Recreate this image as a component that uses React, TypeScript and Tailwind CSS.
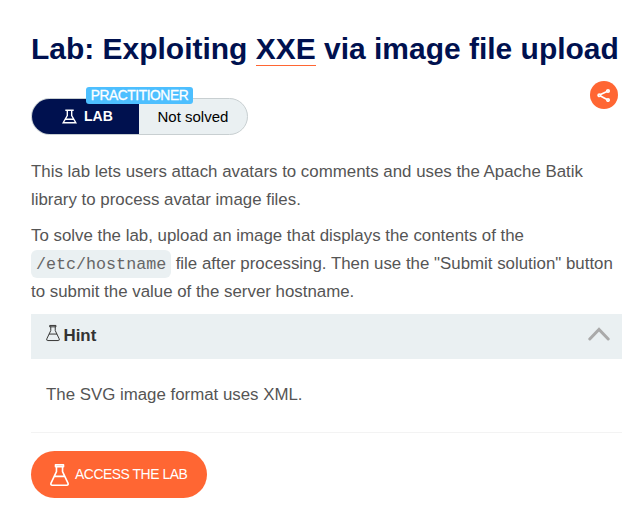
import React from "react";

type FlaskProps = { className: string; color: string; stroke: number };

function Flask({ className, color, stroke }: FlaskProps) {
  return (
    <svg className={className} viewBox="0 0 20 24" fill="none" stroke={color} strokeWidth={stroke} strokeLinejoin="round" strokeLinecap="round">
      <path d="M5.800 1.200h8.400v2H5.800zM6.800 3.200v5.300L1.200 20.300q-1 2.500 1.300 2.500h15q2.300 0 1.300-2.500L13.200 8.500V3.200M4.800 13.500h10.400" />
    </svg>
  );
}

function LabFlask() {
  return (
    <svg className="h-[15px] w-[15px]" viewBox="0 0 15 15" fill="none" stroke="#fff" strokeWidth="1.400">
      <path d="M3.300 1.200h8.400M5.300 1.500v5L1.200 13.700h12.600L9.700 6.500v-5M3.600 10.300h7.800" />
    </svg>
  );
}

export default function App() {
  return (
    <main className="h-[508px] w-[637px] overflow-hidden bg-white pl-[31px] pr-[15px] pt-[29px] font-['Liberation_Sans',Arial,sans-serif] text-[#555555]">
      <h1 className="h-[40px] whitespace-nowrap text-[29.970px] font-bold leading-[40px] text-[#00114f]">
        Lab: Exploiting <a className="inline-block h-[37px] border-b border-[#ff6633] align-top">XXE</a> via image file upload
      </h1>

      <div className="mt-3 flex h-[54px] items-start justify-between">
        <div className="relative mt-[17px] flex h-[37px] w-[217px]">
          <div className="flex w-full overflow-hidden rounded-full border border-[#c8cfd1] bg-[#eaf0f2]">
            <div className="flex w-[107px] items-center gap-[7px] bg-[#00114f] pl-[30px] text-[14px] font-bold text-white">
              <LabFlask />
              <span>LAB</span>
            </div>
            <div className="flex flex-1 items-center pl-[18.500px] pt-px text-[15px] text-black">Not solved</div>
          </div>
          <div className="absolute left-[55px] top-[-11px] flex h-[17px] w-[107px] items-center justify-center rounded-[3px] bg-[#4dbfff] pt-px text-[13.800px] tracking-[-0.450px] text-white [-webkit-text-stroke:0.3px_white]">
            PRACTITIONER
          </div>
        </div>
        <div className="mr-1 flex h-7 w-7 items-center justify-center rounded-full bg-[#ff6633]">
          <svg className="h-[14px] w-[14px]" viewBox="0 0 14 14" fill="none" stroke="#fff" strokeWidth="1.700">
            <path d="M3.500 6.500 10 3.500M3.500 8l6.500 3.500" />
            <circle cx="2.300" cy="7.300" r="1.200" />
            <circle cx="11" cy="3" r="1.200" />
            <circle cx="11" cy="12" r="1.200" />
          </svg>
        </div>
      </div>

      <div className="mt-[23px] whitespace-nowrap text-[16.860px] leading-7">
        <p className="h-14">
          This lab lets users attach avatars to comments and uses the Apache Batik
          <br />
          library to process avatar image files.
        </p>
        <p className="mt-2 h-[84px]">
          To solve the lab, upload an image that displays the contents of the
          <br />
          <code className="inline-block h-7 w-[140px] rounded-[6px] bg-[#eaf0f2] px-[5px] align-top font-['Liberation_Mono','Courier_New',monospace] text-[16.700px] leading-[29px] text-[#666666]">/etc/hostname</code> file after processing. Then use the "Submit solution" button
          <br />
          to submit the value of the server hostname.
        </p>
      </div>

      <section className="mt-[8px] border-b border-[#f3f3f3]">
        <div className="flex h-[45px] items-center justify-between bg-[#eaf0f2] pl-[15px] pr-3">
          <div className="mb-[2px] flex items-center gap-[3.500px] text-[16.850px] font-bold text-[#333332]">
            <Flask className="mb-[5px] h-[18px] w-[14px]" color="#333332" stroke={1.4} />
            <span>Hint</span>
          </div>
          <svg className="mb-[5px] h-[14px] w-[22px]" viewBox="0 0 22 14" fill="none" stroke="#aaaaaa" strokeWidth="3" strokeLinecap="round">
            <path d="M1.800 12 11 2.500l9.200 9.500" />
          </svg>
        </div>
        <p className="h-[73px] pl-[15px] pt-[22px] text-[16.850px] leading-7">The SVG image format uses XML.</p>
      </section>

      <button className="mt-[18px] flex h-[47px] w-[176px] items-center gap-[6px] whitespace-nowrap rounded-full bg-[#ff6633] pl-[19px] text-[13.900px] tracking-[-0.450px] text-white">
        <Flask className="h-6 w-[19px]" color="#fff" stroke={1.7} />
        <span>ACCESS THE LAB</span>
      </button>
    </main>
  );
}
